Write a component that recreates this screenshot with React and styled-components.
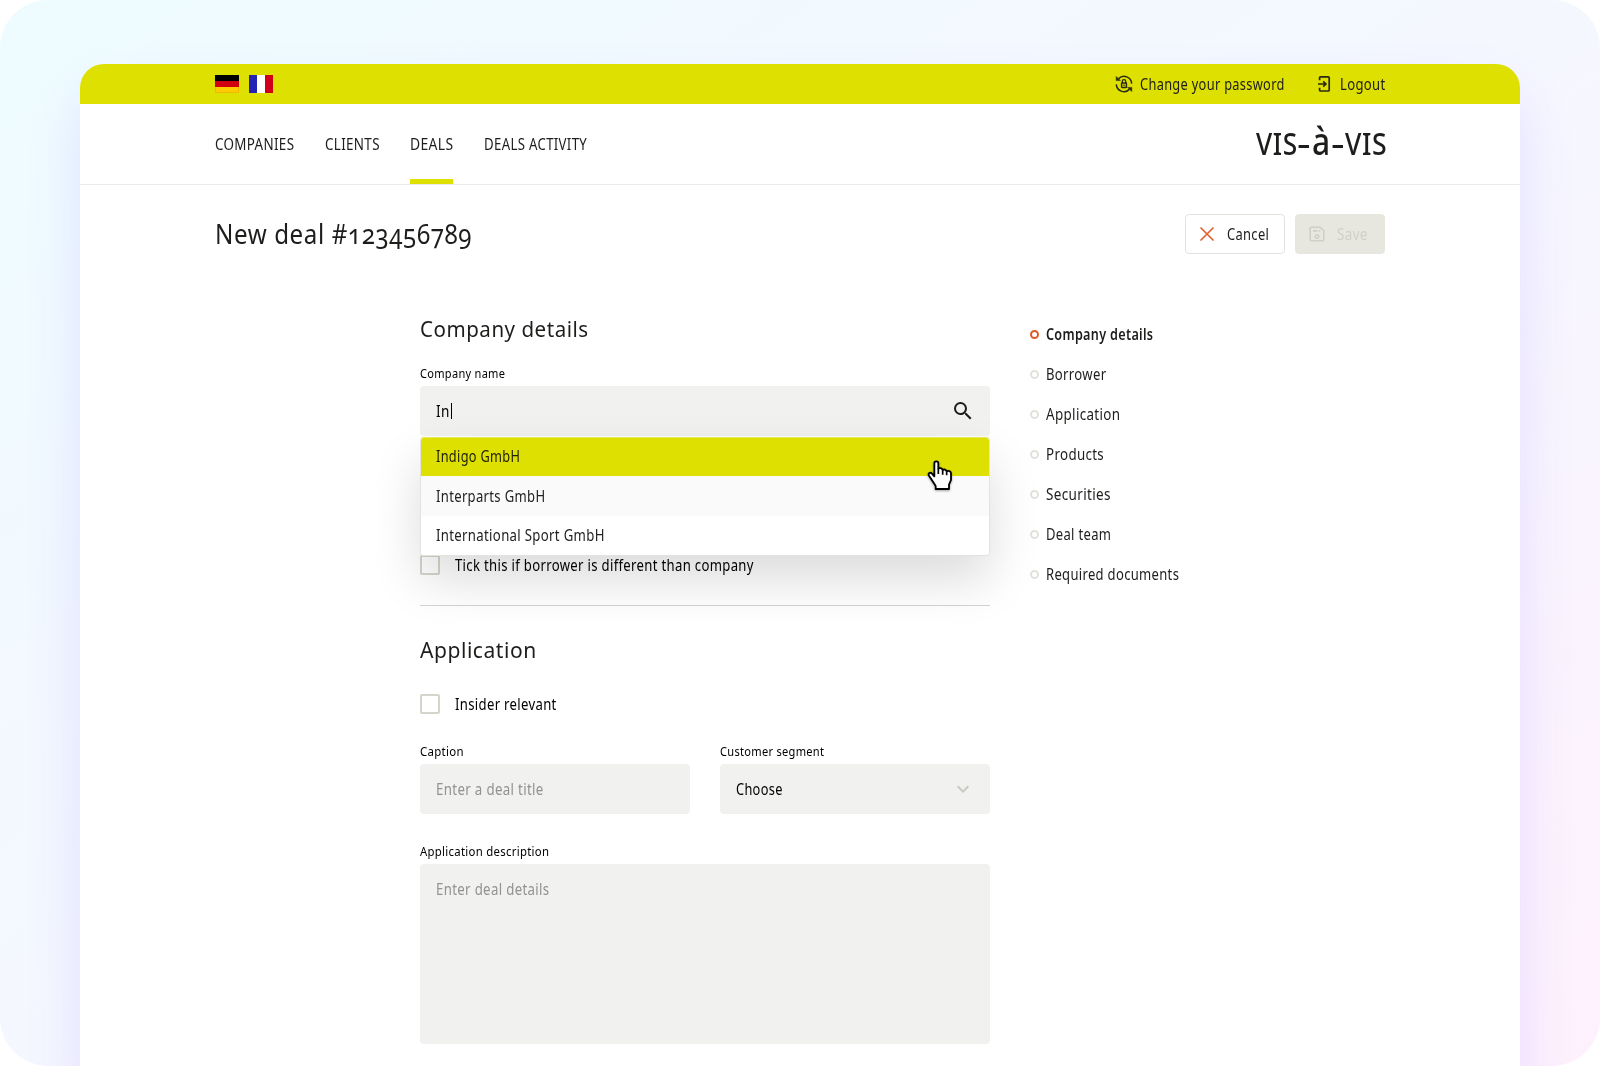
import { useLayoutEffect, useRef, useState } from 'react'
import styled, { createGlobalStyle } from 'styled-components'
import { MdSearch, MdExpandMore } from 'react-icons/md'

const GlobalStyle = createGlobalStyle`
  * {
    box-sizing: border-box;
  }
  body {
    margin: 0;
    background: white;
    color: #1d1d1b;
    font-family: 'Noto Sans', 'Open Sans', sans-serif;
    font-size: 16px;
  }
`

const Backdrop = styled.div`
  width: 1600px;
  height: 1066px;
  padding: 64px 80px 0;
  overflow: hidden;
  border-radius: 48px;
  background: linear-gradient(to bottom right, #eefcff 0%, #f5f7ff 50%, #fef1fd 100%);
`

const Window = styled.div`
  height: 1100px;
  background: white;
  border-radius: 24px 24px 0 0;
  box-shadow: 0 30px 56px rgba(100, 70, 255, 0.13);
`

const TopBar = styled.div`
  display: flex;
  align-items: center;
  justify-content: space-between;
  height: 40px;
  padding: 0 135px;
  background: #dde000;
  border-radius: 24px 24px 0 0;
`

const Group = styled.div`
  display: flex;
  align-items: center;
  gap: ${({ $gap }) => $gap}px;
`

const Header = styled.header`
  display: flex;
  justify-content: space-between;
  height: 81px;
  padding: 0 135px;
  border-bottom: 1px solid #ebebeb;
`

const Nav = styled.nav`
  display: flex;
  gap: 30.5px;
`

const NavItem = styled.div`
  display: flex;
  align-items: center;
  border-top: 5px solid transparent;
  border-bottom: 5px solid ${({ $active }) => ($active ? '#dde000' : 'transparent')};
`

const Logo = styled.div`
  display: flex;
  align-items: baseline;
  height: 70px;
  margin-right: -2px;
  padding-top: 9px;
  color: #1d1d1b;
`

const TitleRow = styled.div`
  display: flex;
  align-items: center;
  justify-content: space-between;
  padding: 29px 135px 0;
`

const Button = styled.div`
  display: flex;
  align-items: center;
  gap: ${({ $gap }) => $gap}px;
  width: ${({ $width }) => $width}px;
  height: 40px;
  padding-left: ${({ $disabled }) => ($disabled ? 13 : 14)}px;
  border: 1px solid ${({ $disabled }) => ($disabled ? '#e7e7df' : '#e3e3de')};
  border-radius: 4px;
  background: ${({ $disabled }) => ($disabled ? '#e7e7df' : 'white')};
  color: ${({ $disabled }) => ($disabled ? '#cfd0c6' : '#1d1d1b')};
`

const Content = styled.div`
  display: grid;
  grid-template-columns: 570px 1fr;
  gap: 40px;
  padding: 60px 135px 0 340px;
`

const Heading = styled.div`
  height: 30px;
  display: flex;
  align-items: center;
`

const Label = styled.div`
  display: flex;
  align-items: center;
  height: 20px;
  margin-bottom: 2px;
  color: black;
`

const Field = styled.div`
  position: relative;
  display: flex;
  align-items: ${({ $tall }) => ($tall ? 'flex-start' : 'center')};
  justify-content: space-between;
  height: ${({ $tall }) => ($tall ? 180 : 50)}px;
  padding: ${({ $tall }) => ($tall ? '13.5px 15px 0 16px' : '0 15px 0 16px')};
  border-radius: 4px;
  background: #f1f1ef;
  color: ${({ $muted }) => ($muted ? '#929292' : 'black')};
`

const Caret = styled.div`
  width: 1px;
  height: 16px;
  background: black;
`

const Dropdown = styled.div`
  position: absolute;
  z-index: 1;
  top: 51px;
  left: 0;
  width: 570px;
  border: 1px solid #e3e3de;
  border-top-color: #e5e65a;
  border-radius: 4px;
  overflow: hidden;
  background: white;
  box-shadow: 0 24px 50px rgba(0, 0, 0, 0.14);
`

const Option = styled.div`
  display: flex;
  align-items: center;
  height: ${({ $height }) => $height}px;
  padding-left: 14.5px;
  color: ${({ $hover }) => ($hover ? '#222208' : '#222220')};
  background: ${({ $hover, $shaded }) => ($hover ? '#dde000' : $shaded ? '#fafafa' : 'white')};
`

const Pointer = styled.svg`
  position: absolute;
  z-index: 2;
  left: 507px;
  top: 74px;
  filter: drop-shadow(0 1px 1px rgba(0, 0, 0, 0.35));
`

const CheckRow = styled.div`
  display: flex;
  align-items: center;
  gap: 15px;
  height: 20px;
  margin-top: ${({ $top }) => $top}px;
  color: black;
`

const Checkbox = styled.div`
  width: 20px;
  height: 20px;
  border: 2px solid #d5d5cd;
  border-radius: 2px;
`

const Divider = styled.div`
  height: 1px;
  margin: 30px 0 29px;
  background: #d3d3cf;
`

const Columns = styled.div`
  display: grid;
  grid-template-columns: 1fr 1fr;
  gap: 30px;
  margin: 28px 0;
`

const Step = styled.div`
  display: flex;
  align-items: center;
  gap: 7px;
  height: 40px;
`

const Ring = styled.div`
  width: 9px;
  height: 9px;
  border: 2px solid ${({ $active }) => ($active ? '#df5a26' : '#e2e2dd')};
  border-radius: 50%;
`

const TextBox = styled.div`
  width: ${({ $width }) => $width}px;
  flex: none;
  padding-bottom: ${({ $drop }) => $drop}px;
  white-space: nowrap;
  line-height: ${({ $size }) => Math.round($size * 0.7) * 2}px;
  font-size: ${({ $size }) => $size}px;
  font-weight: ${({ $weight }) => $weight};
  letter-spacing: 0.025em;
  font-variant-numeric: oldstyle-nums;
`

const Squeezed = styled.span`
  display: inline-block;
  transform-origin: 0 50%;
`

// Narrows the text so that it takes exactly the given width
const Text = ({ width, size = 15.5, weight = 400, drop = 1, children }) => {
  const ref = useRef(null)
  const [scale, setScale] = useState(0.86)

  useLayoutEffect(() => {
    setScale(width / ref.current.offsetWidth)
  }, [width])

  return (
    <TextBox $width={width} $size={size} $weight={weight} $drop={drop}>
      <Squeezed ref={ref} style={{ transform: `scaleX(${scale})` }}>
        {children}
      </Squeezed>
    </TextBox>
  )
}

const GermanFlag = () => (
  <svg width='24' height='18' viewBox='0 0 24 18'>
    <rect width='24' height='18' fill='#fc0' />
    <rect width='24' height='12' fill='#d00010' />
    <rect width='24' height='6' fill='#000' />
    <path d='M0.5 12V17.5H23.5V12' fill='none' stroke='#f0b800' strokeWidth='1' />
  </svg>
)

const FrenchFlag = () => (
  <svg width='24' height='18' viewBox='0 0 24 18'>
    <rect width='24' height='18' fill='#fff' />
    <rect width='8' height='18' fill='#2423b5' />
    <rect x='16' width='8' height='18' fill='#d00018' />
  </svg>
)

const PasswordIcon = () => (
  <svg width='18' height='18' viewBox='0 0 18 18' fill='none' stroke='#2a2a10' strokeWidth='1.5'>
    <path d='M3.6 3.6A7.7 7.7 0 0 1 16.7 8.6' />
    <path d='M14.4 14.4A7.7 7.7 0 0 1 1.3 9.4' />
    <path d='M1.2 1.4V5.6H5.4Z' fill='#2a2a10' strokeWidth='0.5' />
    <path d='M16.8 16.6V12.4H12.6Z' fill='#2a2a10' strokeWidth='0.5' />
    <rect x='6.6' y='8' width='4.8' height='4.5' rx='0.4' />
    <path d='M7.3 8V6.4a1.7 1.7 0 0 1 3.4 0V8' strokeWidth='1.3' />
    <path d='M9 9.5V11' strokeWidth='1.2' />
  </svg>
)

const LogoutIcon = () => (
  <svg width='14' height='18' viewBox='0 0 14 18' fill='none' stroke='#2a2a10' strokeWidth='1.7'>
    <path d='M2.6 5.2V2.8a1 1 0 0 1 1-1H11.2a1 1 0 0 1 1 1V15a1 1 0 0 1-1 1H3.6a1 1 0 0 1-1-1V12.7' />
    <path d='M1 9H8.6M6.2 6.3L8.9 9L6.2 11.7' />
  </svg>
)

const CrossIcon = () => (
  <svg width='14' height='14' viewBox='0 0 14 14' stroke='#e0602f' strokeWidth='1.7' strokeLinecap='round'>
    <path d='M1 1L13 13M13 1L1 13' />
  </svg>
)

const SaveIcon = () => (
  <svg width='16' height='16' viewBox='0 0 16 16' fill='none' stroke='currentColor' strokeWidth='1.6'>
    <path d='M2.2 1.2H11.2L14.8 4.8V13.8a1 1 0 0 1-1 1H2.2a1 1 0 0 1-1-1V2.2a1 1 0 0 1 1-1Z' />
    <path d='M4 4.9H8.4M9.8 4.9H11.2' />
    <circle cx='8' cy='10.4' r='1.7' />
  </svg>
)

const steps = [
  { name: 'Company details', width: 107.5, active: true },
  { name: 'Borrower', width: 60 },
  { name: 'Application', width: 74.5 },
  { name: 'Products', width: 58.5 },
  { name: 'Securities', width: 64.5 },
  { name: 'Deal team', width: 65.5 },
  { name: 'Required documents', width: 133.5 },
]

const App = () => (
  <Backdrop>
    <GlobalStyle />
    <Window>
      <TopBar>
        <Group $gap={10}>
          <GermanFlag />
          <FrenchFlag />
        </Group>
        <Group $gap={32.5}>
          <Group $gap={7}>
            <PasswordIcon />
            <Text width={144.5}>Change your password</Text>
          </Group>
          <Group $gap={9}>
            <LogoutIcon />
            <Text width={45.5}>Logout</Text>
          </Group>
        </Group>
      </TopBar>
      <Header>
        <Nav>
          <NavItem>
            <Text width={79.5}>COMPANIES</Text>
          </NavItem>
          <NavItem>
            <Text width={54.5}>CLIENTS</Text>
          </NavItem>
          <NavItem $active>
            <Text width={43}>DEALS</Text>
          </NavItem>
          <NavItem>
            <Text width={103}>DEALS ACTIVITY</Text>
          </NavItem>
        </Nav>
        <Logo>
          <Text width={41.5} size={31} weight={500}>VIS</Text>
          <Text width={14.5} size={32} weight={500}>-</Text>
          <Text width={19} size={38.5} weight={500}>à</Text>
          <Text width={14.5} size={32} weight={500}>-</Text>
          <Text width={42} size={31} weight={500}>VIS</Text>
        </Logo>
      </Header>
      <TitleRow>
        <Text width={257.5} size={27}>New deal #123456789</Text>
        <Group $gap={10}>
          <Button $width={100} $gap={13}>
            <CrossIcon />
            <Text width={42.5}>Cancel</Text>
          </Button>
          <Button $width={90} $gap={12} $disabled>
            <SaveIcon />
            <Text width={30.5}>Save</Text>
          </Button>
        </Group>
      </TitleRow>
      <Content>
        <div>
          <Heading>
            <Text width={169} size={22.5} drop={0}>Company details</Text>
          </Heading>
          <CheckRow $top={0} />
          <Label>
            <Text width={85} size={13} drop={2}>Company name</Text>
          </Label>
          <Field>
            <Group $gap={1}>
              <Text width={14}>In</Text>
              <Caret />
            </Group>
            <MdSearch size={24} color='#1d1d1b' />
            <Dropdown>
              <Option $height={38} $hover>
                <Text width={84} drop={3}>Indigo GmbH</Text>
              </Option>
              <Option $height={40} $shaded>
                <Text width={109.5}>Interparts GmbH</Text>
              </Option>
              <Option $height={39}>
                <Text width={169}>International Sport GmbH</Text>
              </Option>
            </Dropdown>
            <Pointer width='26' height='31' viewBox='-2 -2 78 93'>
              <path
                d='M20 8C20 0 32 0 32 8V24C36 21 43 22 45 28C49 25 56 27 57 32C62 29 70 32 70 38V58L64 72V85H24V76L15 62L4 45C0 37 8 34 13 39L20 47Z'
                fill='#fff'
                stroke='#000'
                strokeWidth='5.5'
                strokeLinejoin='round'
              />
              <path d='M32 24V40M45 28V42M57 32V44' stroke='#000' strokeWidth='5' />
            </Pointer>
          </Field>
          <CheckRow $top={119}>
            <Checkbox />
            <Text width={298.5}>Tick this if borrower is different than company</Text>
          </CheckRow>
          <Divider />
          <Heading>
            <Text width={117} size={22.5} drop={0}>Application</Text>
          </Heading>
          <CheckRow $top={29}>
            <Checkbox />
            <Text width={101.5}>Insider relevant</Text>
          </CheckRow>
          <Columns>
            <div>
              <Label>
                <Text width={44} size={13} drop={2}>Caption</Text>
              </Label>
              <Field $muted>
                <Text width={108}>Enter a deal title</Text>
              </Field>
            </div>
            <div>
              <Label>
                <Text width={104} size={13} drop={2}>Customer segment</Text>
              </Label>
              <Field>
                <Text width={47}>Choose</Text>
                <MdExpandMore size={24} color='#c9cabf' />
              </Field>
            </div>
          </Columns>
          <Label>
            <Text width={129.5} size={13} drop={2}>Application description</Text>
          </Label>
          <Field $tall $muted>
            <Text width={113.5}>Enter deal details</Text>
          </Field>
        </div>
        <div>
          {steps.map(({ name, width, active }) => (
            <Step key={name}>
              <Ring $active={active} />
              <Text width={width} weight={active ? 600 : 400}>{name}</Text>
            </Step>
          ))}
        </div>
      </Content>
    </Window>
  </Backdrop>
)

export default App
